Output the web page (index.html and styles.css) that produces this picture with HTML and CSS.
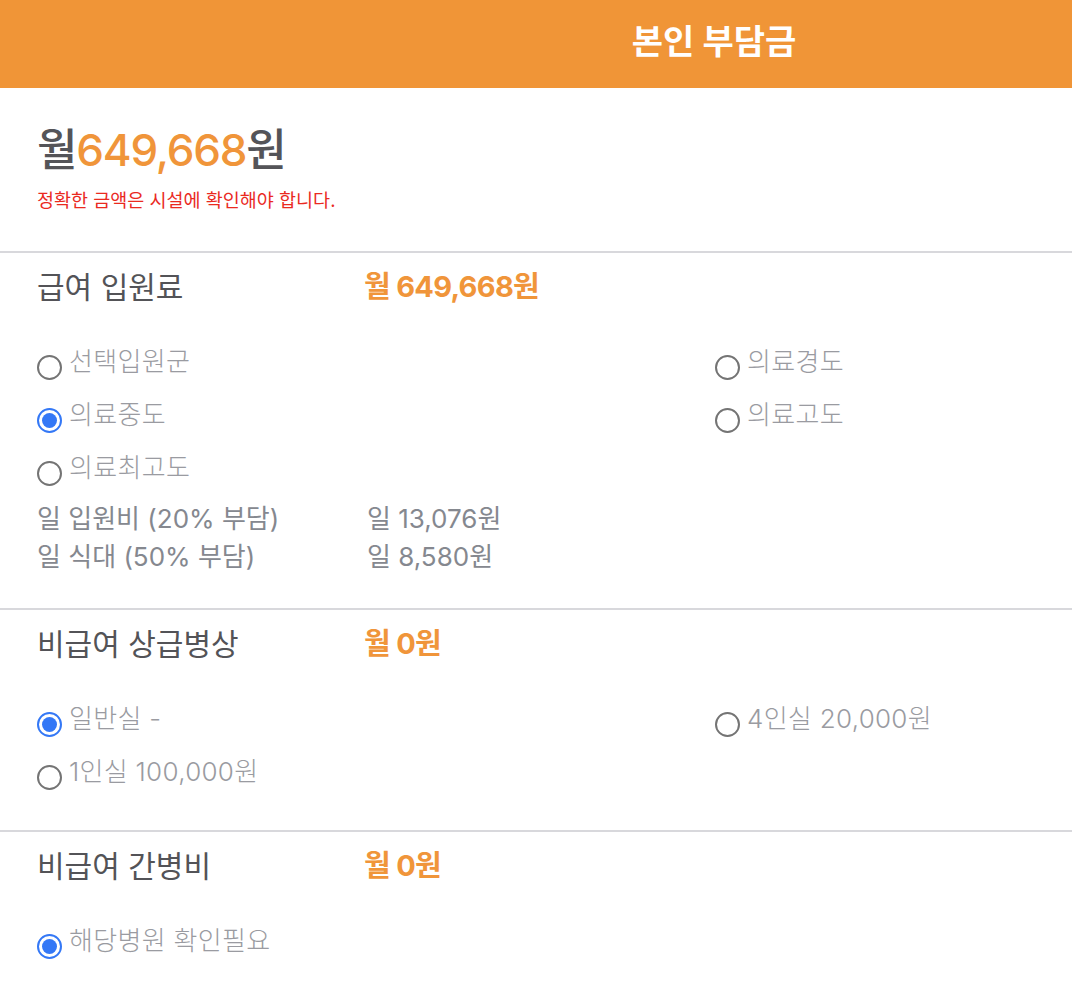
FILE: index.html
```html
<!DOCTYPE html>
<html lang="ko">
<head>
<meta charset="utf-8">
<title>본인 부담금</title>
<link rel="stylesheet" href="styles.css">
</head>
<body>
<header class="topbar">
  <h1 class="topbar-title">본인 부담금</h1>
</header>

<section class="summary">
  <div class="total">월<span class="total-num">649,668</span>원</div>
  <p class="notice">정확한 금액은 시설에 확인해야 합니다.</p>
</section>

<section class="block">
  <div class="block-head">
    <h2 class="block-title">급여 입원료</h2>
    <div class="block-amount">월 649,668원</div>
  </div>
  <div class="options">
    <label class="opt"><span class="radio"></span><span class="opt-text">선택입원군</span></label>
    <label class="opt"><span class="radio"></span><span class="opt-text">의료경도</span></label>
    <label class="opt"><span class="radio checked"></span><span class="opt-text">의료중도</span></label>
    <label class="opt"><span class="radio"></span><span class="opt-text">의료고도</span></label>
    <label class="opt"><span class="radio"></span><span class="opt-text">의료최고도</span></label>
  </div>
  <div class="details">
    <div class="detail-label">일 입원비 (20% 부담)</div>
    <div class="detail-value">일 13,076원</div>
    <div class="detail-label">일 식대 (50% 부담)</div>
    <div class="detail-value">일 8,580원</div>
  </div>
</section>

<section class="block">
  <div class="block-head">
    <h2 class="block-title">비급여 상급병상</h2>
    <div class="block-amount">월 0원</div>
  </div>
  <div class="options options-wide">
    <label class="opt"><span class="radio checked"></span><span class="opt-text">일반실 -</span></label>
    <label class="opt"><span class="radio"></span><span class="opt-text">4인실 20,000원</span></label>
    <label class="opt"><span class="radio"></span><span class="opt-text">1인실 100,000원</span></label>
  </div>
</section>

<section class="block block-last">
  <div class="block-head">
    <h2 class="block-title">비급여 간병비</h2>
    <div class="block-amount">월 0원</div>
  </div>
  <div class="options options-wide">
    <label class="opt"><span class="radio checked"></span><span class="opt-text">해당병원 확인필요</span></label>
  </div>
</section>
</body>
</html>
```

FILE: styles.css
```css
* { box-sizing: border-box; }

html, body {
  margin: 0;
  padding: 0;
  background: #ffffff;
  font-family: "Inter", "Noto Sans CJK KR", sans-serif;
  color: #555559;
}

.topbar {
  height: 88px;
  background: #f09537;
  display: flex;
  align-items: center;
  justify-content: center;
  padding-left: 356px;
}

.topbar-title {
  margin: 0;
  font-size: 34px;
  font-weight: 700;
  color: #ffffff;
  line-height: 40px;
  padding-bottom: 4px;
}

.summary {
  padding: 34px 37px 40px;
  border-bottom: 2px solid #d8d8dc;
}

.total {
  font-size: 44px;
  font-weight: 500;
  line-height: 56px;
  color: #545458;
  letter-spacing: -1.2px;
}

.total-num {
  color: #f0953a;
}

.notice {
  margin: 11px 0 0;
  font-size: 18.5px;
  line-height: 22px;
  color: #ea2a1f;
}

.block {
  padding: 14px 37px 32px;
  border-bottom: 2px solid #d8d8dc;
}

.block-last {
  border-bottom: none;
}

.block-head {
  display: grid;
  grid-template-columns: 327px 1fr;
  align-items: center;
  height: 40px;
}

.block-title {
  margin: 0;
  font-size: 30px;
  font-weight: 400;
  color: #535357;
  line-height: 40px;
}

.block-amount {
  font-size: 29px;
  font-weight: 700;
  color: #f0953a;
  line-height: 40px;
  letter-spacing: -0.7px;
}

.options {
  display: grid;
  grid-template-columns: 678px 1fr;
  margin-top: 28px;
}

.opt {
  display: flex;
  align-items: center;
  height: 53px;
}

.radio {
  flex: none;
  width: 25px;
  height: 25px;
  border-radius: 50%;
  border: 2px solid #747474;
  margin-top: 12px;
  margin-right: 7px;
  position: relative;
}

.radio.checked {
  border-color: #3478f6;
}

.radio.checked::after {
  content: "";
  position: absolute;
  left: 3px;
  top: 3px;
  width: 15px;
  height: 15px;
  border-radius: 50%;
  background: #3478f6;
}

.opt-text {
  font-size: 26px;
  font-weight: 300;
  color: #9a9ba1;
  line-height: 53px;
  letter-spacing: 0.3px;
}

.details {
  display: grid;
  grid-template-columns: 330px 1fr;
  margin-top: 6px;
}

.detail-label,
.detail-value {
  font-size: 26px;
  font-weight: 400;
  color: #85888f;
  line-height: 38px;
}
```
